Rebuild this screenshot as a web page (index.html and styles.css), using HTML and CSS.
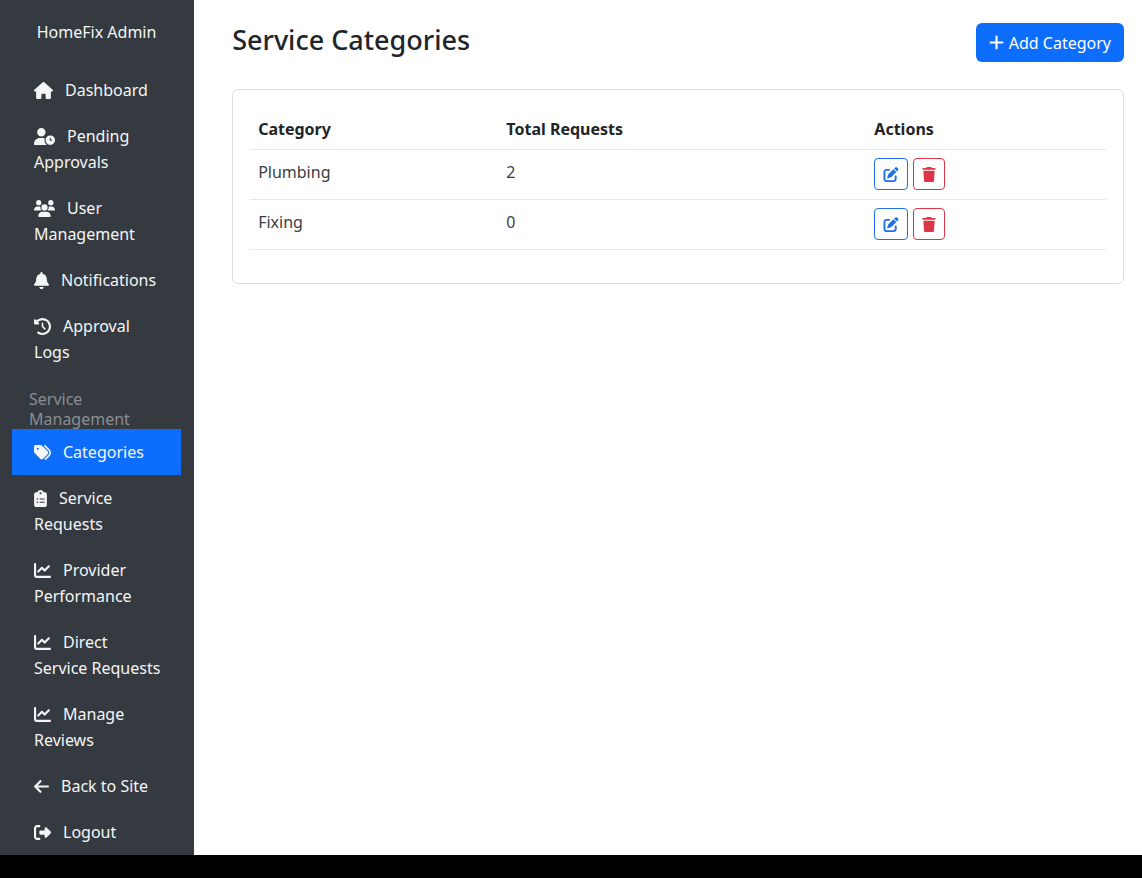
FILE: index.html
```html
<!DOCTYPE html>
<html lang="en">
<head>
<meta charset="utf-8">
<meta name="viewport" content="width=device-width, initial-scale=1">
<title>Service Categories</title>
<link rel="stylesheet" href="styles.css">
</head>
<body>
<svg class="sprite" aria-hidden="true">
  <symbol id="home" viewBox="0 0 576 512"><path d="M575.8 255.5c0 18-15 32.1-32 32.1h-32l.7 160.2c0 2.7-.2 5.4-.5 8.1V472c0 22.1-17.9 40-40 40H456c-1.1 0-2.2 0-3.3-.1c-1.4 .1-2.8 .1-4.2 .1H416 392c-22.1 0-40-17.9-40-40V448 384c0-17.7-14.3-32-32-32H256c-17.7 0-32 14.3-32 32v64 24c0 22.1-17.9 40-40 40H160 128.1c-1.5 0-3-.1-4.5-.2c-1.2 .1-2.4 .2-3.6 .2H104c-22.1 0-40-17.9-40-40V360c0-.9 0-1.9 .1-2.8V287.6H32c-18 0-32-14-32-32.1c0-9 3-17 10-24L266.4 8c7-7 15-8 22-8s15 2 21 7L564.8 231.5c8 7 12 15 11 24z"/></symbol>
  <symbol id="user-clock" viewBox="0 0 640 512"><path d="M224 0a128 128 0 1 1 0 256A128 128 0 1 1 224 0zM178.3 304h91.4c20.6 0 40.4 3.5 58.8 9.9C323 331 320 349.1 320 368c0 59.5 29.5 112.1 74.8 144H29.7C13.3 512 0 498.7 0 482.3C0 383.8 79.8 304 178.3 304z"/><path fill-rule="evenodd" d="M352 368a144 144 0 1 1 288 0 144 144 0 1 1 -288 0zm144-80c-8.8 0-16 7.2-16 16v64c0 8.8 7.2 16 16 16h48c8.8 0 16-7.2 16-16s-7.2-16-16-16H512V304c0-8.8-7.2-16-16-16z"/></symbol>
  <symbol id="users" viewBox="0 0 640 512"><path d="M144 0a80 80 0 1 1 0 160A80 80 0 1 1 144 0zM512 0a80 80 0 1 1 0 160A80 80 0 1 1 512 0zM0 298.7C0 239.8 47.8 192 106.7 192h42.7c15.9 0 31 3.5 44.6 9.7c-1.3 7.2-1.9 14.7-1.9 22.3c0 38.2 16.8 72.5 43.3 96c-.2 0-.4 0-.7 0H21.3C9.6 320 0 310.4 0 298.7zM405.3 320c-.2 0-.4 0-.7 0c26.6-23.5 43.3-57.8 43.3-96c0-7.6-.7-15-1.9-22.3c13.6-6.3 28.7-9.7 44.6-9.7h42.7C592.2 192 640 239.8 640 298.7c0 11.8-9.6 21.3-21.3 21.3H405.3zM224 224a96 96 0 1 1 192 0 96 96 0 1 1 -192 0zM128 485.3C128 411.7 187.7 352 261.3 352H378.7C452.3 352 512 411.7 512 485.3c0 14.7-11.9 26.7-26.7 26.7H154.7c-14.7 0-26.7-11.9-26.7-26.7z"/></symbol>
  <symbol id="bell" viewBox="0 0 448 512"><path d="M224 0c-17.7 0-32 14.3-32 32V51.2C119 66 64 130.6 64 208v18.8c0 47-17.3 92.4-48.5 127.6l-7.4 8.3c-8.4 9.4-10.4 22.9-5.3 34.4S19.4 416 32 416H416c12.6 0 24-7.4 29.2-18.9s3.1-25-5.3-34.4l-7.4-8.3C401.3 319.2 384 273.9 384 226.8V208c0-77.4-55-142-128-156.8V32c0-17.7-14.3-32-32-32zm45.3 493.3c12-12 18.7-28.3 18.7-45.3H224 160c0 17 6.7 33.3 18.7 45.3s28.3 18.7 45.3 18.7s33.3-6.7 45.3-18.7z"/></symbol>
  <symbol id="history" viewBox="0 0 512 512"><path d="M75 75L41 41C25.9 25.9 0 36.6 0 57.9V168c0 13.3 10.7 24 24 24H134.1c21.4 0 32.1-25.9 17-41l-30.8-30.8C155 85.5 203 64 256 64c106 0 192 86 192 192s-86 192-192 192c-40.8 0-78.6-12.7-109.7-34.4c-14.5-10.1-34.4-6.6-44.6 7.9s-6.6 34.4 7.9 44.6C151.2 495 201.7 512 256 512c141.4 0 256-114.6 256-256S397.4 0 256 0C185.3 0 121.3 28.7 75 75zm181 53c-13.3 0-24 10.7-24 24V256c0 6.4 2.5 12.5 7 17l72 72c9.4 9.4 24.6 9.4 33.9 0s9.4-24.6 0-33.9l-65-65V152c0-13.3-10.7-24-24-24z"/></symbol>
  <symbol id="tags" viewBox="0 0 512 512"><path fill-rule="evenodd" d="M345 39.1L472.8 168.4c52.4 53 52.4 138.2 0 191.2L360.8 472.9c-9.3 9.4-24.5 9.5-33.9 .2s-9.5-24.5-.2-33.9L438.6 325.9c33.9-34.3 33.9-89.4 0-123.7L310.9 72.9c-9.3-9.4-9.2-24.6 .2-33.9s24.6-9.2 33.9 .2zM0 229.5V80C0 53.5 21.5 32 48 32H197.5c17 0 33.3 6.7 45.3 18.7l168 168c25 25 25 65.5 0 90.5L277.3 442.7c-25 25-65.5 25-90.5 0l-168-168C6.7 262.7 0 246.5 0 229.5zM144 144a32 32 0 1 0 -64 0 32 32 0 1 0 64 0z"/></symbol>
  <symbol id="clipboard" viewBox="0 0 384 512"><path fill-rule="evenodd" d="M192 0c-41.8 0-77.4 26.7-90.5 64H64C28.7 64 0 92.7 0 128V448c0 35.3 28.7 64 64 64H320c35.3 0 64-28.7 64-64V128c0-35.3-28.7-64-64-64H282.5C269.4 26.7 233.8 0 192 0zm0 64a32 32 0 1 1 0 64 32 32 0 1 1 0-64zM72 272a24 24 0 1 1 48 0 24 24 0 1 1 -48 0zm104-16H304c8.8 0 16 7.2 16 16s-7.2 16-16 16H176c-8.8 0-16-7.2-16-16s7.2-16 16-16zM72 368a24 24 0 1 1 48 0 24 24 0 1 1 -48 0zm88 0c0-8.8 7.2-16 16-16H304c8.8 0 16 7.2 16 16s-7.2 16-16 16H176c-8.8 0-16-7.2-16-16z"/></symbol>
  <symbol id="chart" viewBox="0 0 512 512"><path d="M64 64c0-17.7-14.3-32-32-32S0 46.3 0 64V400c0 44.2 35.8 80 80 80H480c17.7 0 32-14.3 32-32s-14.3-32-32-32H80c-8.8 0-16-7.2-16-16V64zm406.6 86.6c12.5-12.5 12.5-32.8 0-45.3s-32.8-12.5-45.3 0L320 210.7l-57.4-57.4c-12.5-12.5-32.8-12.5-45.3 0l-112 112c-12.5 12.5-12.5 32.8 0 45.3s32.8 12.5 45.3 0L240 221.3l57.4 57.4c12.5 12.5 32.8 12.5 45.3 0l128-128z"/></symbol>
  <symbol id="arrow-left" viewBox="0 0 448 512"><path d="M9.4 233.4c-12.5 12.5-12.5 32.8 0 45.3l160 160c12.5 12.5 32.8 12.5 45.3 0s12.5-32.8 0-45.3L109.2 288 416 288c17.7 0 32-14.3 32-32s-14.3-32-32-32l-306.7 0L214.6 118.6c12.5-12.5 12.5-32.8 0-45.3s-32.8-12.5-45.3 0l-160 160z"/></symbol>
  <symbol id="logout" viewBox="0 0 512 512"><path d="M377.9 105.9L500.7 228.7c7.2 7.2 11.3 17.1 11.3 27.3s-4.1 20.1-11.3 27.3L377.9 406.1c-6.4 6.4-15 9.9-24 9.9c-18.7 0-33.9-15.2-33.9-33.9l0-62.1-128 0c-17.7 0-32-14.3-32-32l0-64c0-17.7 14.3-32 32-32l128 0 0-62.1c0-18.7 15.2-33.9 33.9-33.9c9 0 17.6 3.6 24 9.9zM160 96L96 96c-17.7 0-32 14.3-32 32l0 256c0 17.7 14.3 32 32 32l64 0c17.7 0 32 14.3 32 32s-14.3 32-32 32l-64 0c-53 0-96-43-96-96L0 128C0 75 43 32 96 32l64 0c17.7 0 32 14.3 32 32s-14.3 32-32 32z"/></symbol>
  <symbol id="plus" viewBox="0 0 448 512"><path d="M256 80c0-17.7-14.3-32-32-32s-32 14.3-32 32V224H48c-17.7 0-32 14.3-32 32s14.3 32 32 32H192V432c0 17.7 14.3 32 32 32s32-14.3 32-32V288H400c17.7 0 32-14.3 32-32s-14.3-32-32-32H256V80z"/></symbol>
  <symbol id="edit" viewBox="0 0 512 512"><path d="M471.6 21.7c-21.9-21.9-57.3-21.9-79.2 0L362.3 51.7l97.9 97.9 30.1-30.1c21.9-21.9 21.9-57.3 0-79.2L471.6 21.7zm-299.2 220c-6.1 6.1-10.8 13.6-13.5 21.9l-29.6 88.8c-2.9 8.6-.6 18.1 5.8 24.6s15.9 8.7 24.6 5.8l88.8-29.6c8.2-2.7 15.7-7.4 21.9-13.5L437.7 172.3 339.7 74.3 172.4 241.7zM96 64C43 64 0 107 0 160V416c0 53 43 96 96 96H352c53 0 96-43 96-96V320c0-17.7-14.3-32-32-32s-32 14.3-32 32v96c0 17.7-14.3 32-32 32H96c-17.7 0-32-14.3-32-32V160c0-17.7 14.3-32 32-32h96c17.7 0 32-14.3 32-32s-14.3-32-32-32H96z"/></symbol>
  <symbol id="trash" viewBox="0 0 448 512"><path d="M135.2 17.7L128 32H32C14.3 32 0 46.3 0 64S14.3 96 32 96H416c17.7 0 32-14.3 32-32s-14.3-32-32-32H320l-7.2-14.3C307.4 6.8 296.3 0 284.2 0H163.8c-12.1 0-23.2 6.8-28.6 17.7zM416 128H32L53.2 467c1.6 25.3 22.6 45 47.9 45H346.9c25.3 0 46.3-19.7 47.9-45L416 128z"/></symbol>
</svg>

<div class="shell">
  <nav class="sidebar" aria-label="Admin">
    <div class="brand">HomeFix Admin</div>
    <ul class="menu">
      <li><a class="menu-link" href="#"><svg class="icon icon-lg"><use href="#home"/></svg>Dashboard</a></li>
      <li><a class="menu-link" href="#"><svg class="icon icon-xl"><use href="#user-clock"/></svg>Pending Approvals</a></li>
      <li><a class="menu-link" href="#"><svg class="icon icon-xl"><use href="#users"/></svg>User Management</a></li>
      <li><a class="menu-link" href="#"><svg class="icon icon-sm"><use href="#bell"/></svg>Notifications</a></li>
      <li><a class="menu-link" href="#"><svg class="icon"><use href="#history"/></svg>Approval Logs</a></li>
    </ul>
    <h2 class="menu-heading">Service Management</h2>
    <ul class="menu">
      <li><a class="menu-link active" href="#" aria-current="page"><svg class="icon"><use href="#tags"/></svg>Categories</a></li>
      <li><a class="menu-link" href="#"><svg class="icon icon-xs"><use href="#clipboard"/></svg>Service Requests</a></li>
      <li><a class="menu-link" href="#"><svg class="icon"><use href="#chart"/></svg>Provider Performance</a></li>
      <li><a class="menu-link" href="#"><svg class="icon"><use href="#chart"/></svg>Direct Service&nbsp;Requests</a></li>
      <li><a class="menu-link" href="#"><svg class="icon"><use href="#chart"/></svg>Manage Reviews</a></li>
      <li><a class="menu-link" href="#"><svg class="icon icon-sm"><use href="#arrow-left"/></svg>Back to Site</a></li>
      <li><a class="menu-link" href="#"><svg class="icon"><use href="#logout"/></svg>Logout</a></li>
    </ul>
  </nav>

  <main class="content">
    <header class="page-header">
      <h1 class="page-title">Service Categories</h1>
      <button class="btn-primary" type="button"><svg class="btn-icon"><use href="#plus"/></svg>Add Category</button>
    </header>
    <section class="card">
      <table class="table">
        <thead>
          <tr><th class="col-name" scope="col">Category</th><th class="col-total" scope="col">Total Requests</th><th scope="col">Actions</th></tr>
        </thead>
        <tbody>
          <tr>
            <td>Plumbing</td><td>2</td>
            <td><div class="actions">
              <button class="btn-outline edit" type="button" aria-label="Edit Plumbing"><svg class="action-icon"><use href="#edit"/></svg></button>
              <button class="btn-outline delete" type="button" aria-label="Delete Plumbing"><svg class="action-icon narrow"><use href="#trash"/></svg></button>
            </div></td>
          </tr>
          <tr>
            <td>Fixing</td><td>0</td>
            <td><div class="actions">
              <button class="btn-outline edit" type="button" aria-label="Edit Fixing"><svg class="action-icon"><use href="#edit"/></svg></button>
              <button class="btn-outline delete" type="button" aria-label="Delete Fixing"><svg class="action-icon narrow"><use href="#trash"/></svg></button>
            </div></td>
          </tr>
        </tbody>
      </table>
    </section>
  </main>
</div>
</body>
</html>
```

FILE: styles.css
```css
* {
  box-sizing: border-box;
}

body {
  margin: 0;
  min-height: 100vh;
  display: flex;
  flex-direction: column;
  padding-bottom: 23px;
  background: #000;
  color: #212529;
  font-family: "Noto Sans", "Open Sans", sans-serif;
  font-size: 16px;
  line-height: 26px;
}

svg {
  fill: currentColor;
}

.sprite {
  display: none;
}

.shell {
  flex: 1;
  display: grid;
  grid-template-columns: 17% 1fr;
  background: #fff;
}

/* Sidebar */
.sidebar {
  padding: 19px 13px 0 12px;
  background: #343a40;
  color: #f4f5f6;
}

.brand {
  margin-bottom: 22px;
  text-align: center;
}

.menu {
  margin: 0;
  padding: 0;
  list-style: none;
}

.menu-link {
  display: block;
  padding: 10px 20px 10px 22px;
  color: inherit;
  text-decoration: none;
}

.menu-link.active {
  background: #0d6efd;
}

.icon {
  width: 17px;
  height: 17px;
  margin-right: 12px;
  vertical-align: -3px;
}

.icon-xs {
  width: 13px;
}

.icon-sm {
  width: 15px;
}

.icon-lg {
  width: 19px;
}

.icon-xl {
  width: 21px;
}

.menu-heading {
  margin: 14px 0 0;
  padding: 0 17px;
  color: #8b8d90;
  font-size: 16px;
  font-weight: 400;
  line-height: 20px;
}

/* Main area */
.content {
  min-width: 0;
  padding: 23px 18px 24px 38px;
}

.page-header {
  display: flex;
  justify-content: space-between;
  align-items: flex-start;
  margin-bottom: 27px;
}

.page-title {
  margin: 0;
  font-size: 27px;
  font-weight: 500;
  line-height: 34px;
}

.btn-primary {
  display: flex;
  align-items: center;
  gap: 5px;
  height: 39px;
  padding: 0 13px;
  border: 0;
  border-radius: 6px;
  background: #0d6efd;
  color: #fff;
  font: inherit;
}

.btn-icon {
  width: 15px;
  height: 17px;
}

.card {
  padding: 17px;
  border: 1px solid #dcdddf;
  border-radius: 6px;
}

.table {
  width: 100%;
  margin-bottom: 16px;
  border-collapse: collapse;
}

.table th,
.table td {
  border-bottom: 1px solid #e6e8ea;
  text-align: left;
  vertical-align: top;
}

.table th {
  padding: 9px 8px 7px;
  font-weight: 700;
}

.table td {
  padding: 8px 8px 9px;
  color: #3a3e42;
  line-height: 28px;
}

.col-name {
  width: 29%;
}

.col-total {
  width: 43%;
}

.actions {
  display: flex;
  gap: 5px;
}

.btn-outline {
  display: flex;
  align-items: center;
  height: 32px;
  padding: 0 8px;
  border: 1px solid currentColor;
  border-radius: 4px;
  background: #fff;
}

.edit {
  color: #1f6fe8;
}

.delete {
  color: #dc3545;
}

.action-icon {
  width: 16px;
  height: 15px;
}

.action-icon.narrow {
  width: 14px;
}
```
